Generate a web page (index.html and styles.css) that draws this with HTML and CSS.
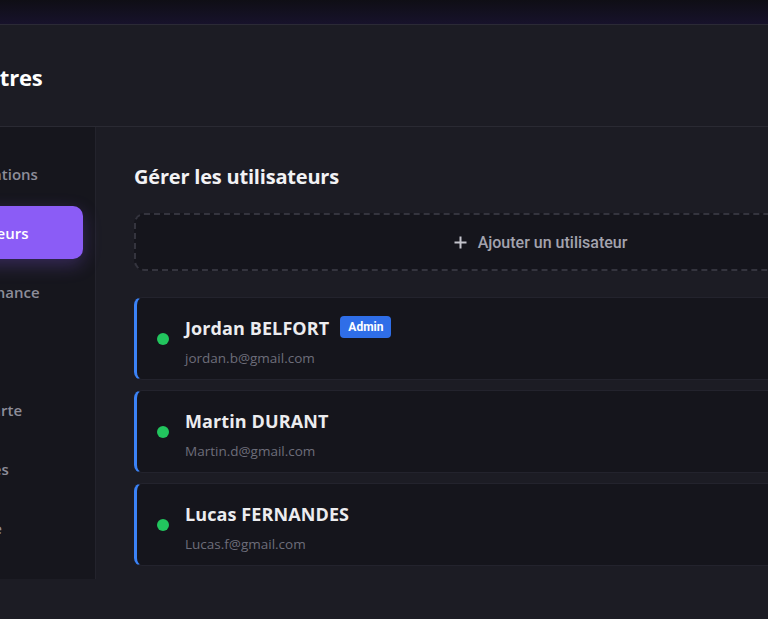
FILE: index.html
```html
<!DOCTYPE html>
<html lang="fr">
<head>
<meta charset="utf-8">
<link rel="stylesheet" href="styles.css">
</head>
<body>
<div class="topbar"></div>
<div class="app">
  <header class="page-header">
    <h1 class="page-title">Paramètres</h1>
  </header>
  <div class="layout">
    <nav class="sidebar">
      <a class="nav-item">Notifications</a>
      <a class="nav-item active">Utilisateurs</a>
      <a class="nav-item">Maintenance</a>
      <a class="nav-item">Profil</a>
      <a class="nav-item">Fond carte</a>
      <a class="nav-item">Données</a>
      <a class="nav-item">Compte</a>
    </nav>
    <main class="main">
      <h2 class="section-title">Gérer les utilisateurs</h2>
      <button class="add-btn">
        <svg class="plus" width="13" height="13" viewBox="0 0 13 13"><path d="M6.5 0.5v12M0.5 6.5h12" stroke="currentColor" stroke-width="2"/></svg>
        <span>Ajouter un utilisateur</span>
      </button>
      <ul class="users">
        <li class="user-card">
          <span class="status-dot"></span>
          <div class="user-info">
            <div class="user-name-row"><span class="user-name">Jordan BELFORT</span><span class="badge">Admin</span></div>
            <div class="user-email">jordan.b@gmail.com</div>
          </div>
        </li>
        <li class="user-card">
          <span class="status-dot"></span>
          <div class="user-info">
            <div class="user-name-row"><span class="user-name">Martin DURANT</span></div>
            <div class="user-email">Martin.d@gmail.com</div>
          </div>
        </li>
        <li class="user-card">
          <span class="status-dot"></span>
          <div class="user-info">
            <div class="user-name-row"><span class="user-name">Lucas FERNANDES</span></div>
            <div class="user-email">Lucas.f@gmail.com</div>
          </div>
        </li>
      </ul>
    </main>
  </div>
</div>
</body>
</html>
```
FILE: styles.css
```css
* { box-sizing: border-box; }
html, body { margin: 0; padding: 0; }
body {
  background: #1c1c24;
  font-family: "Open Sans", "Noto Sans", sans-serif;
  overflow: hidden;
  width: 768px;
  height: 619px;
}
.topbar {
  height: 25px;
  background: linear-gradient(180deg, #0f0e15 0%, #17122b 100%);
  border-bottom: 1px solid #2b2a36;
}
.app {
  margin-left: -165px;
  width: 1150px;
}
.page-header {
  height: 102px;
  display: flex;
  align-items: center;
  padding-left: 81px;
  padding-top: 2px;
  border-bottom: 1px solid #2a2a33;
  background: #1c1c24;
}
.page-title {
  margin: 0;
  font-size: 22px;
  font-weight: 700;
  color: #ffffff;
  letter-spacing: -0.2px;
}
.layout {
  display: flex;
  align-items: stretch;
}
.sidebar {
  width: 261px;
  flex: none;
  background: #16161d;
  border-right: 1px solid #23232c;
  padding: 20px 12px 0 12px;
  display: flex;
  flex-direction: column;
  gap: 6px;
}
.nav-item {
  display: flex;
  align-items: center;
  height: 53px;
  padding-left: 98px;
  border-radius: 10px;
  font-size: 15px;
  font-weight: 600;
  color: #8d8d99;
}
.nav-item.active {
  background: #8b5cf6;
  color: #ffffff;
  box-shadow: 0 6px 18px rgba(139, 92, 246, 0.28);
}
.main {
  flex: 1;
  padding: 38px 38px 13px 38px;
}
.section-title {
  margin: 0 0 24px 0;
  font-size: 20px;
  font-weight: 700;
  color: #f2f2f4;
  line-height: 24px;
  letter-spacing: -0.2px;
}
.add-btn {
  width: 100%;
  height: 58px;
  display: flex;
  align-items: center;
  justify-content: center;
  gap: 11px;
  background: #15151c;
  border: 2px dashed #34343e;
  border-radius: 10px;
  font-family: Roboto, "Liberation Sans", sans-serif;
  font-size: 16px;
  font-weight: 500;
  color: #a3a3ae;
  padding: 0;
}
.plus { color: #c4c4cc; }
.users {
  list-style: none;
  margin: 26px 0 0 0;
  padding: 0;
  display: flex;
  flex-direction: column;
  gap: 10px;
}
.user-card {
  height: 83px;
  display: flex;
  align-items: center;
  gap: 16px;
  padding-left: 20px;
  background: #15151c;
  border: 1px solid #23232d;
  border-left: 3px solid #3b82f6;
  border-radius: 8px;
}
.status-dot {
  width: 12px;
  height: 12px;
  border-radius: 50%;
  background: #22c55e;
  flex: none;
}
.user-info {
  display: flex;
  flex-direction: column;
  gap: 9px;
  padding-top: 7px;
}
.user-name-row {
  display: flex;
  align-items: center;
  gap: 11px;
}
.user-name {
  font-size: 18px;
  font-weight: 700;
  color: #ececef;
  line-height: 23px;
  letter-spacing: 0.1px;
}
.badge {
  background: #2f6ee8;
  color: #ffffff;
  font-family: Roboto, "Liberation Sans", sans-serif;
  font-size: 12px;
  font-weight: 700;
  padding: 0 8px;
  height: 22px;
  line-height: 22px;
  border-radius: 4px;
  margin-top: -2px;
}
.user-email {
  font-size: 13.5px;
  color: #6d6d7a;
  line-height: 19px;
}
```
